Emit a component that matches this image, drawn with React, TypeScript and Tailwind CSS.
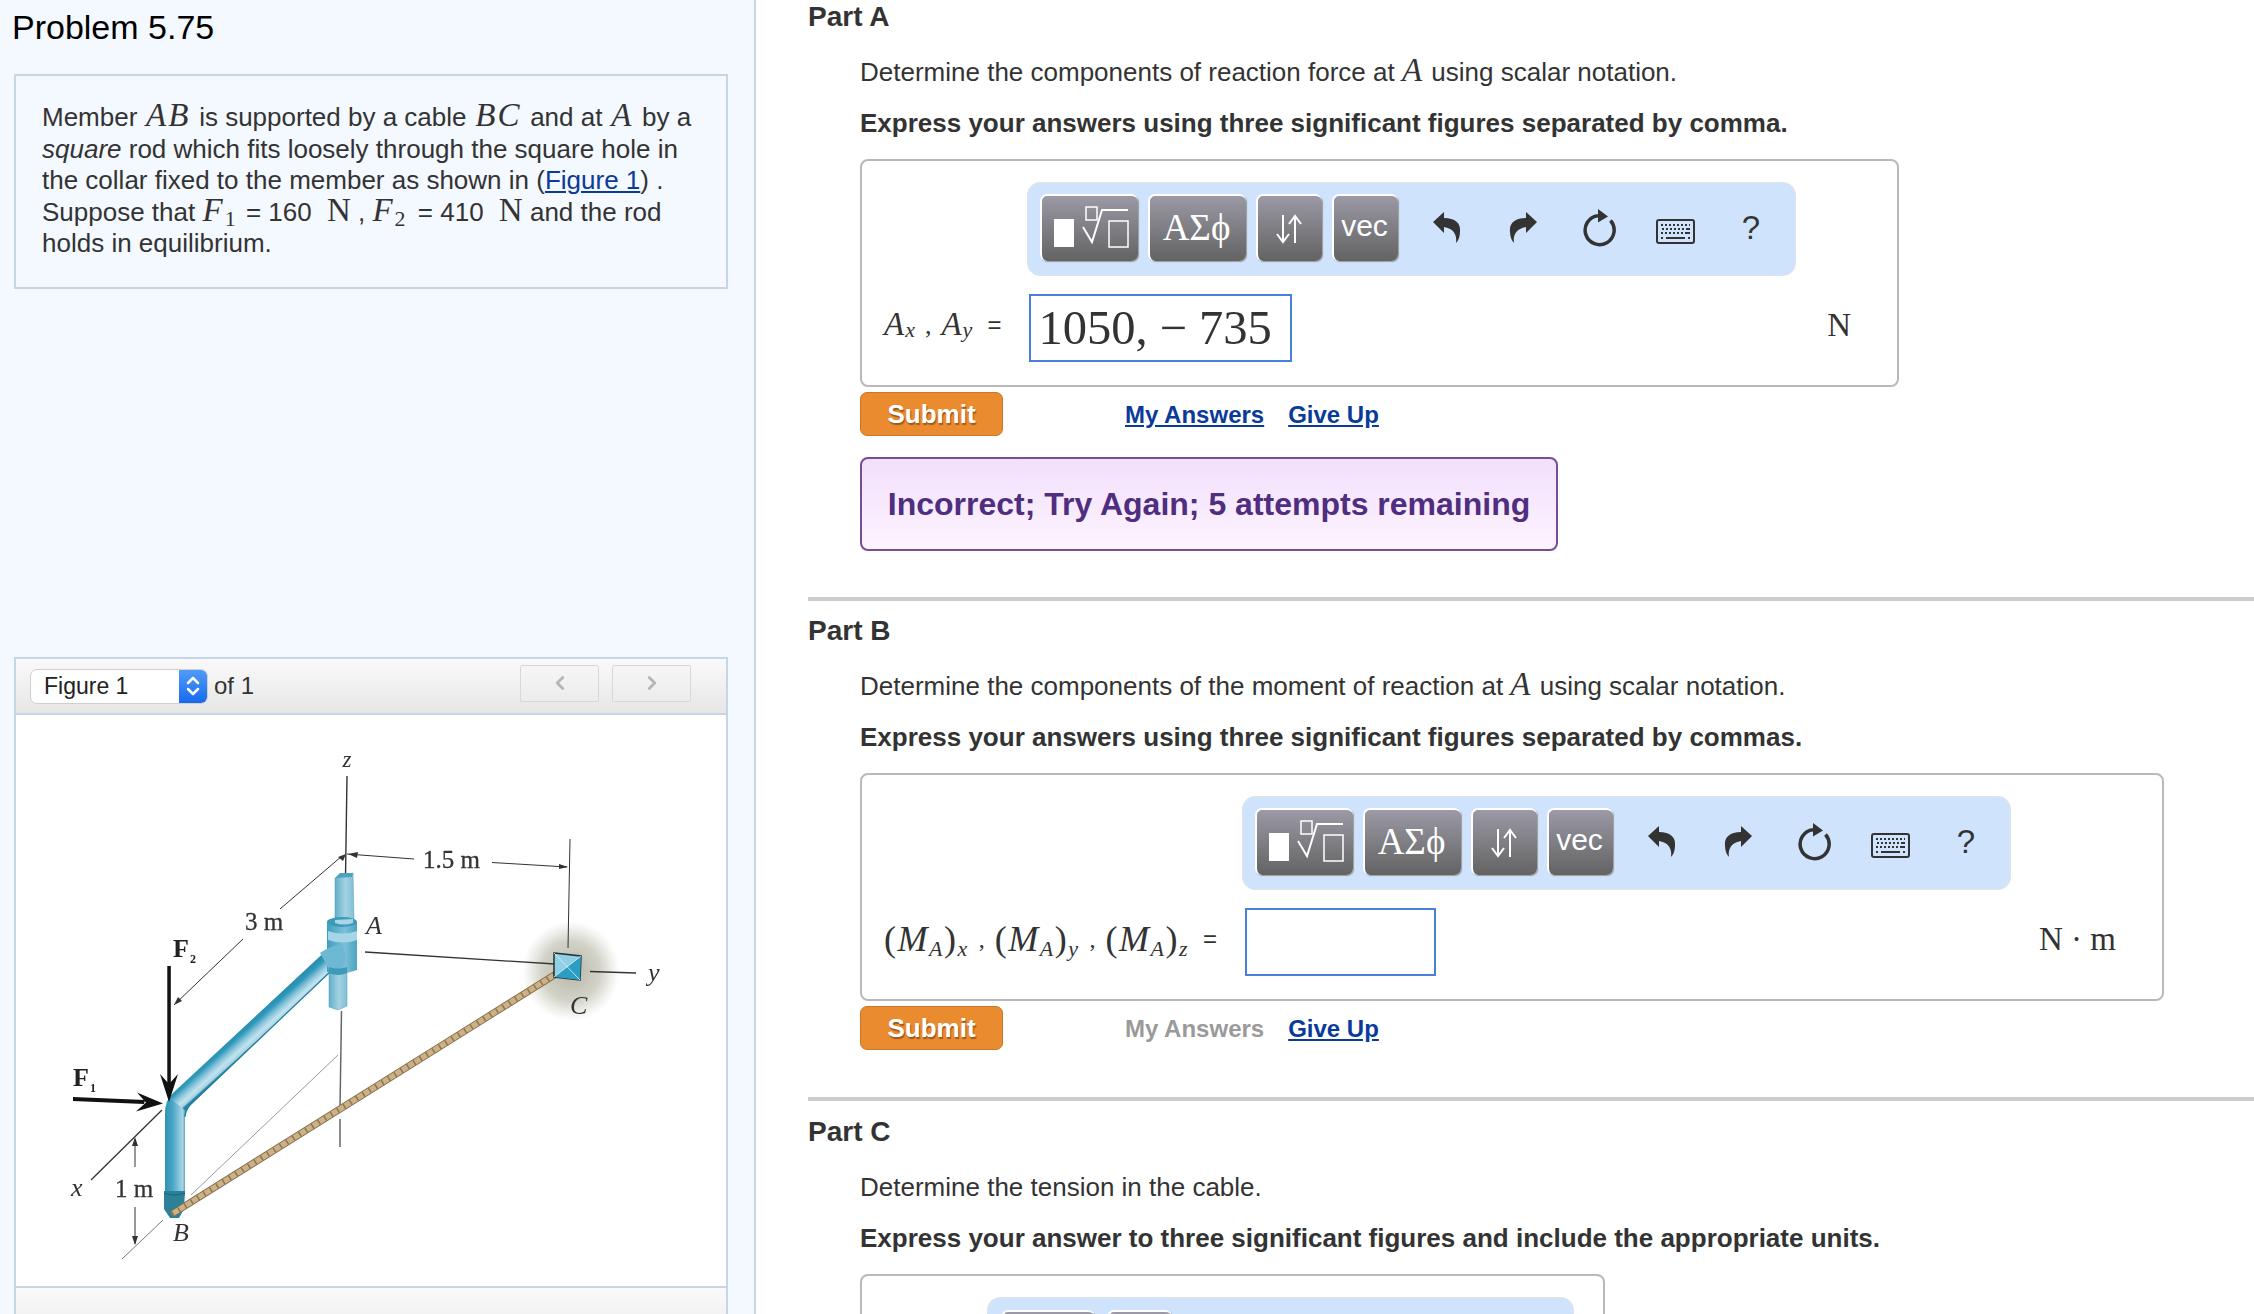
import { ChevronLeft, ChevronRight, ChevronsUpDown } from "lucide-react";
import type { ReactNode } from "react";

function Mi({ children }: { children: ReactNode }) {
  return <span className="font-['Liberation_Serif',serif] text-[33px] italic leading-[0] tracking-[2px]">{children}</span>;
}

function ToolButton({ className, children }: { className: string; children: ReactNode }) {
  return (
    <div
      className={`flex h-[67px] items-center justify-center rounded-[7px] border-t-2 border-l-2 border-white bg-gradient-to-b from-[#9b9aa6] to-[#636363] text-white shadow-[1px_1px_1px_#999] ${className}`}
    >
      {children}
    </div>
  );
}

function TemplateIcon() {
  return (
    <svg width="96" height="65" viewBox="2 2 96 65" fill="none" stroke="white" strokeWidth="1.5">
      <rect x="14" y="25" width="20" height="28" fill="white" stroke="none" />
      <rect x="46" y="13" width="11" height="13" />
      <path d="M43 33l9 15 10-32h26" strokeWidth="2" />
      <rect x="69" y="27" width="19" height="26" />
    </svg>
  );
}

function ArrowsIcon() {
  return (
    <svg width="28" height="30" viewBox="0 0 28 30" fill="none" stroke="white" strokeWidth="2">
      <path d="M8 1v27M2 20l6 8 6-8" />
      <path d="M20 29V2M14 10l6-8 6 8" />
    </svg>
  );
}

function UndoIcon({ flip }: { flip?: boolean }) {
  return (
    <svg width="28" height="31" viewBox="0 0 28 31" fill="#333" className={flip ? "-scale-x-100" : ""}>
      <path d="M0 10L11 0V6C22 6 28 11 27 20C27 25 25 29 23 31C24 24 22 17 11 15V21Z" />
    </svg>
  );
}

function ReloadIcon() {
  return (
    <svg width="34" height="38" viewBox="0 0 34 38" fill="none">
      <path d="M27.500 11.500a14.500 14.500 0 1 1-12.500-4.800" stroke="#333" strokeWidth="3.5" />
      <path d="M15 0l10 7.500-10 6z" fill="#333" />
    </svg>
  );
}

function KeyboardIcon() {
  return (
    <svg width="39" height="25" viewBox="0 0 39 25" fill="none">
      <rect x="1" y="1" width="37" height="23" rx="2" stroke="#333" strokeWidth="2" />
      <path d="M5 6h2M9 6h2M13 6h2M17 6h2M21 6h2M25 6h2M29 6h2M33 6h1" stroke="#333" strokeWidth="2" />
      <path d="M6 10h2M10 10h2M14 10h2M18 10h2M22 10h2M26 10h2M30 10h4" stroke="#333" strokeWidth="2" />
      <path d="M5 14h2M9 14h2M13 14h2M17 14h2M21 14h2M25 14h2M29 14h5" stroke="#333" strokeWidth="2" />
      <path d="M5 19h2M10 19h19M32 19h2" stroke="#333" strokeWidth="2" />
    </svg>
  );
}

function Toolbar({ className }: { className: string }) {
  return (
    <div
      className={`flex h-[94px] w-[769px] items-center rounded-[13px] border border-[#e0e3e6] bg-[#cfe4fc] pb-[3px] pl-[12px] ${className}`}
    >
      <ToolButton className="w-[98px]">
        <TemplateIcon />
      </ToolButton>
      <ToolButton className="ml-[10px] w-[98px] pb-[2px] pr-[3px] font-['Liberation_Serif',serif] text-[37px]">ΑΣϕ</ToolButton>
      <ToolButton className="ml-[10px] w-[66px] pr-[2px]">
        <ArrowsIcon />
      </ToolButton>
      <ToolButton className="ml-[10px] w-[66px] pb-[6px] pr-[3px] text-[30px]">vec</ToolButton>
      <div className="ml-[35px] flex w-[28px] justify-center">
        <UndoIcon />
      </div>
      <div className="ml-[48px] flex w-[28px] justify-center">
        <UndoIcon flip />
      </div>
      <div className="ml-[46px] flex w-[34px] justify-center">
        <ReloadIcon />
      </div>
      <div className="ml-[39px] flex w-[39px] justify-center pt-[8px]">
        <KeyboardIcon />
      </div>
      <div className="ml-[46px] w-[20px] text-center text-[33px] leading-none text-[#333]">?</div>
    </div>
  );
}

function SubmitRow({ answersActive }: { answersActive: boolean }) {
  return (
    <div className="ml-[52px] mt-[5px] flex h-[44px] items-center">
      <div className="flex h-full w-[143px] items-center justify-center rounded-[7px] border border-[#c9772a] bg-[#eb8b2f] text-[26px] font-bold text-white [text-shadow:1px_2px_1px_#9a5a1e]">
        Submit
      </div>
      <a
        className={`ml-[122px] pt-[1px] text-[24px] font-bold ${answersActive ? "text-[#0a3a9a] underline" : "text-[#9a9a9a]"}`}
      >
        My Answers
      </a>
      <a className="ml-[24px] pt-[1px] text-[24px] font-bold text-[#0a3a9a] underline">Give Up</a>
    </div>
  );
}

function PartHeader({ title, lead, task }: { title: string; lead: ReactNode; task: string }) {
  return (
    <>
      <h2 className="h-[34px] text-[28px] font-bold leading-[34px] text-[#333]">{title}</h2>
      <p className="mt-[21px] h-[34px] pl-[52px] text-[26px] leading-[34px] text-[#333]">{lead}</p>
      <p className="mt-[17px] h-[34px] pl-[52px] text-[26px] font-bold leading-[34px] text-[#333]">{task}</p>
    </>
  );
}

function AnswerBox({
  width,
  toolbar,
  label,
  value,
  inputWidth,
  unit,
}: {
  width: string;
  toolbar: string;
  label: ReactNode;
  value: string;
  inputWidth: string;
  unit: string;
}) {
  return (
    <div className={`ml-[52px] mt-[19px] h-[228px] rounded-[8px] border-2 border-[#b9b9b9] bg-white ${width}`}>
      <Toolbar className={`mt-[21px] ${toolbar}`} />
      <div className="mt-[18px] flex items-center pl-[22px] pr-[46px] font-['Liberation_Serif',serif] text-[#333]">
        <div className="mr-[28px] flex items-center whitespace-nowrap pb-[6px]">{label}</div>
        <div
          className={`flex h-[68px] items-center border-2 border-[#4a7edb] pl-[7px] pt-[1px] text-[48.500px] leading-none ${inputWidth}`}
        >
          {value}
        </div>
        <div className="ml-auto pb-[4px] text-[33px]">{unit}</div>
      </div>
    </div>
  );
}

function Sub({ children }: { children: ReactNode }) {
  return <sub className="relative top-[5px] align-baseline text-[22px] italic">{children}</sub>;
}

function LineSub({ children }: { children: ReactNode }) {
  return <sub className="font-['Liberation_Serif',serif] text-[22px] leading-[0]">{children}</sub>;
}

function Unit() {
  return <span className="ml-[8px] font-['Liberation_Serif',serif] text-[33px] leading-[0]">N</span>;
}

function MomentTerm({ axis }: { axis: string }) {
  return (
    <span className="text-[36px] tracking-[1.5px]">
      (<span className="italic">M</span>
      <Sub>A</Sub>)<Sub>{axis}</Sub>
    </span>
  );
}

function Figure() {
  return (
    <svg viewBox="16 714 710 571" className="block h-[571px] w-full bg-white blur-[0.4px]">
      <defs>
        <linearGradient id="bar" gradientUnits="userSpaceOnUse" x1="238" y1="1022" x2="256" y2="1042">
          <stop offset="0" stopColor="#1c7fa3" />
          <stop offset="0.4" stopColor="#2f98ba" />
          <stop offset="0.62" stopColor="#8cc6dc" />
          <stop offset="0.8" stopColor="#c3e2ee" />
          <stop offset="0.94" stopColor="#a6d3e4" />
          <stop offset="1" stopColor="#2a86a5" />
        </linearGradient>
        <linearGradient id="leg" gradientUnits="userSpaceOnUse" x1="164" y1="1150" x2="186" y2="1150">
          <stop offset="0" stopColor="#2a8fb0" />
          <stop offset="0.4" stopColor="#4aa7c6" />
          <stop offset="0.85" stopColor="#a8d5e6" />
          <stop offset="1" stopColor="#3a8fab" />
        </linearGradient>
        <linearGradient id="collar" x1="0" y1="0" x2="1" y2="0">
          <stop offset="0" stopColor="#3e9fbf" />
          <stop offset="0.6" stopColor="#7cc0d8" />
          <stop offset="1" stopColor="#4aa3c1" />
        </linearGradient>
        <linearGradient id="rod" x1="0" y1="0" x2="1" y2="0">
          <stop offset="0" stopColor="#62afc9" />
          <stop offset="0.55" stopColor="#a3d2e2" />
          <stop offset="1" stopColor="#7fc0d6" />
        </linearGradient>
        <radialGradient id="glow">
          <stop offset="0" stopColor="#76775a" stopOpacity="0.55" />
          <stop offset="0.6" stopColor="#8a8b6e" stopOpacity="0.38" />
          <stop offset="1" stopColor="#a0a08a" stopOpacity="0" />
        </radialGradient>
      </defs>

      <ellipse cx="571" cy="970" rx="49" ry="50" fill="url(#glow)" />

      {/* Thin construction lines */}
      <g fill="none" stroke="#333" strokeWidth="1">
        <path d="M347 775L345.5 876" strokeWidth="1.4" />
        <path d="M342 855L280 908M243 938L174 1004" />
        <path d="M347 853L414 858M492 861.5L567 866" />
        <path d="M570 838L568 947" />
        <path d="M365 951L555 963" strokeWidth="1.3" />
        <path d="M590 970.5L636 972" strokeWidth="1.3" />
        <path d="M162 1109L91 1179" strokeWidth="1.3" />
        <path d="M135 1138V1166M135 1206V1243" />
        <path d="M163 1219L122 1258" stroke="#777" />
        <path d="M191 1194L338 1054" stroke="#999" />
        <path d="M341.5 1010L340 1108M340 1118V1146" stroke="#666" strokeWidth="1.5" />
      </g>
      <path d="M346 853l-8 3 5 4zM348 853l10-2-1 6zM568 866l-9-3 0 5zM174 1004l4-8 4 4zM135 1136l-3 9h6zM135 1244l-3-9h6z" fill="#333" />

      {/* Member */}
      <path d="M335 877l18-5 1 48h-19z" fill="url(#rod)" stroke="#4f9cb6" strokeWidth="0.5" />
      <path d="M335 877l5-5 13 0-1 4z" fill="#4ba3c1" />
      <path d="M329 972l18-1v34l-9 4-9-3z" fill="url(#rod)" stroke="#4f9cb6" strokeWidth="0.5" />
      <path
        d="M331 945L173 1092Q165 1099 165 1112V1195H185V1116Q185 1110 190 1104L331 970z"
        fill="url(#bar)"
      />
      <path d="M165 1112Q165 1104 171 1098L186 1110Q185 1112 185 1116V1195H165z" fill="url(#leg)" />
      <path d="M185 1116Q185 1110 190 1104L331 970" fill="none" stroke="#1f7b99" strokeWidth="1.2" />
      <path d="M164 1190h21l-1 18-5 9h-9l-6-9z" fill="#2c8199" />
      <path d="M164 1192q10 4 21 0" fill="none" stroke="#1e6478" strokeWidth="1" />
      <path d="M327 921q15-9 30 0v48l-10 3-20-1z" fill="url(#collar)" />
      <ellipse cx="342" cy="921" rx="15" ry="5" fill="#3e9ab9" />
      <path d="M335 919l18-1v4q-9 3-18 0z" fill="#a9d6e6" />
      <path d="M328 930q14 5 29 0v9q-14 5-29 0z" fill="#a4d6e7" />
      <path d="M320 952q12-8 20-8q8 9 4 20l-13 8z" fill="#6db8d2" />
      <path d="M329 972q9 4 18 0v-6q-9 3-18 0z" fill="#3e9ab9" />

      {/* Cable */}
      <path d="M172 1213L564 968" stroke="#7a6748" strokeWidth="7" />
      <path d="M172 1213L564 968" stroke="#cdb184" strokeWidth="5.5" />
      <path d="M172 1213L564 968" stroke="#8a7656" strokeWidth="5.5" strokeDasharray="1.5 6" />

      {/* Collar at C */}
      <path d="M554 952l27 3-1 24-26-3z" fill="#8fd0e4" stroke="#22303a" strokeWidth="1.5" />
      <path d="M581 955l-1 24-26-3z" fill="#2c9ec3" />
      <path d="M554 952l26 27M581 955l-27 21" stroke="#e5f3f8" strokeWidth="0.8" />

      {/* Forces */}
      <g fill="#111">
        <rect x="167.300" y="965" width="3.500" height="118" />
        <path d="M169 1101l-9-28 9 10 9-10z" />
        <path d="M73 1096l72 3-1 4-71-3z" />
        <path d="M163 1102.500l-27 8 10-9-9-10z" />
      </g>

      {/* Labels */}
      <g fontFamily="'Liberation Serif', serif" fill="#333">
        <text x="347" y="766" fontSize="23" fontStyle="italic" textAnchor="middle">z</text>
        <text x="245" y="929" fontSize="25" stroke="#333" strokeWidth="0.3">3 m</text>
        <text x="423" y="867" fontSize="25" stroke="#333" strokeWidth="0.3">1.5 m</text>
        <text x="366" y="933" fontSize="26" fontStyle="italic">A</text>
        <text x="648" y="980" fontSize="26" fontStyle="italic">y</text>
        <text x="570" y="1013" fontSize="26" fontStyle="italic">C</text>
        <text x="173" y="1240" fontSize="26" fontStyle="italic">B</text>
        <text x="71" y="1195" fontSize="26" fontStyle="italic">x</text>
        <text x="115" y="1196" fontSize="25" stroke="#333" strokeWidth="0.3">1 m</text>
        <text x="173" y="956" fontSize="26" fontWeight="bold" fill="#222">F</text>
        <text x="190" y="962" fontSize="12" fontWeight="bold" fill="#222">2</text>
        <text x="73" y="1085" fontSize="26" fontWeight="bold" fill="#222">F</text>
        <text x="90" y="1091" fontSize="12" fontWeight="bold" fill="#222">1</text>
      </g>
    </svg>
  );
}

export default function App() {
  return (
    <div className="flex h-[1314px] w-[2254px] overflow-hidden bg-white font-['Liberation_Sans',Arial,sans-serif]">
      {/* Left column */}
      <aside className="w-[756px] shrink-0 border-r-2 border-[#c5d4e8] bg-[#f4f8ff] pl-[14px]">
        <h1 className="-ml-[2px] h-[54px] text-[34px] leading-[54px] text-black">Problem 5.75</h1>
        <div className="mt-[20px] h-[215px] w-[714px] border-2 border-[#c6d6e8] pl-[26px] pt-[26px] text-[26px] leading-[31.600px] text-[#333]">
          <div className="whitespace-nowrap">
            Member <span className="mx-[1.500px]"><Mi>AB</Mi></span> is supported by a cable{" "}
            <span className="mx-[1.500px]"><Mi>BC</Mi></span> and at <span className="mx-[1.500px]"><Mi>A</Mi></span> by a
          </div>
          <div className="whitespace-nowrap">
            <em>square</em> rod which fits loosely through the square hole in
          </div>
          <div className="whitespace-nowrap">
            the collar fixed to the member as shown in (<a className="text-[#0a3a9a] underline">Figure 1</a>) .
          </div>
          <div className="whitespace-nowrap">
            Suppose that <Mi>F</Mi>
            <LineSub>1</LineSub> <span className="ml-[3px]">= 160</span> <Unit /> , <Mi>F</Mi>
            <LineSub>2</LineSub> <span className="ml-[5px]">= 410</span> <Unit /> and the rod
          </div>
          <div className="whitespace-nowrap">holds in equilibrium.</div>
        </div>

        <div className="mt-[368px] w-[714px] border-x-2 border-t-2 border-[#c6d6e8]">
          <div className="flex h-[56px] items-center border-b-2 border-[#c6d6e8] bg-gradient-to-b from-[#fafafa] to-[#e6e6e6] pl-[14px]">
            <div className="flex h-[35px] w-[178px] items-center overflow-hidden rounded-[7px] border border-[#d0d0d0] bg-white">
              <span className="w-[148px] pl-[13px] text-[23px] text-[#222]">Figure 1</span>
              <span className="flex h-full flex-1 items-center justify-center bg-gradient-to-b from-[#4f9bf8] to-[#1769ee] text-white">
                <ChevronsUpDown className="h-[24px] w-[24px]" strokeWidth={2.5} />
              </span>
            </div>
            <span className="ml-[6px] text-[24px] text-[#333]">of 1</span>
            <div className="mb-[6px] ml-[266px] flex h-[37px] w-[79px] items-center justify-center rounded-[2px] border border-[#d8d8d8] bg-gradient-to-b from-[#f6f6f6] to-[#ececec] text-[#b5b5b5]">
              <ChevronLeft className="h-[22px] w-[22px]" strokeWidth={3} />
            </div>
            <div className="mb-[6px] ml-[13px] flex h-[37px] w-[79px] items-center justify-center rounded-[2px] border border-[#d8d8d8] bg-gradient-to-b from-[#f6f6f6] to-[#ececec] text-[#b5b5b5]">
              <ChevronRight className="h-[22px] w-[22px]" strokeWidth={3} />
            </div>
          </div>
          <Figure />
          <div className="h-[40px] border-t-2 border-[#c6d6e8] bg-gradient-to-b from-[#fafafa] to-[#efefef]" />
        </div>
      </aside>

      {/* Right column */}
      <main className="flex-1 pl-[52px]">
        <PartHeader
          title="Part A"
          lead={
            <>
              Determine the components of reaction force at <Mi>A</Mi> using scalar notation.
            </>
          }
          task="Express your answers using three significant figures separated by comma."
        />
        <AnswerBox
          width="w-[1039px]"
          toolbar="ml-[165px]"
          inputWidth="w-[263px]"
          value="1050, − 735"
          unit="N"
          label={
            <>
              <span className="text-[33px] italic tracking-[1px]">A</span>
              <Sub>x</Sub>
              <span className="mx-[10px] text-[26px]">,</span>
              <span className="text-[33px] italic tracking-[1px]">A</span>
              <Sub>y</Sub>
              <span className="ml-[15px] font-['Liberation_Sans',sans-serif] text-[24px]">=</span>
            </>
          }
        />
        <SubmitRow answersActive />
        <div className="ml-[52px] mt-[21px] flex h-[94px] w-[698px] items-center justify-center rounded-[8px] border-2 border-[#7a4c93] bg-gradient-to-b from-[#f2dffc] to-[#fdf4ff] text-[32px] font-bold text-[#4f2d7f]">
          Incorrect; Try Again; 5 attempts remaining
        </div>
        <div className="mt-[46px] h-[4px] bg-[#cccccc]" />

        <div className="mt-[13px]">
          <PartHeader
            title="Part B"
            lead={
              <>
                Determine the components of the moment of reaction at <Mi>A</Mi> using scalar notation.
              </>
            }
            task="Express your answers using three significant figures separated by commas."
          />
        </div>
        <AnswerBox
          width="w-[1304px]"
          toolbar="ml-[380px]"
          inputWidth="w-[191px]"
          value=""
          unit="N · m"
          label={
            <>
              <MomentTerm axis="x" />
              <span className="mx-[10px] text-[24px]">,</span>
              <MomentTerm axis="y" />
              <span className="mx-[10px] text-[24px]">,</span>
              <MomentTerm axis="z" />
              <span className="ml-[14px] font-['Liberation_Sans',sans-serif] text-[24px]">=</span>
            </>
          }
        />
        <SubmitRow answersActive={false} />
        <div className="mt-[47px] h-[4px] bg-[#cccccc]" />

        <div className="mt-[14px]">
          <PartHeader
            title="Part C"
            lead="Determine the tension in the cable."
            task="Express your answer to three significant figures and include the appropriate units."
          />
        </div>
        <div className="ml-[52px] mt-[19px] h-[100px] w-[745px] rounded-[8px] border-2 border-[#b9b9b9] bg-white">
          <div className="ml-[125px] mt-[21px] flex h-[94px] w-[587px] items-start rounded-[13px] border border-[#e0e3e6] bg-[#cfe4fc] pl-[13px] pt-[12px]">
            <ToolButton className="w-[94px]"> </ToolButton>
            <ToolButton className="ml-[12px] w-[65px]"> </ToolButton>
          </div>
        </div>
      </main>
    </div>
  );
}
